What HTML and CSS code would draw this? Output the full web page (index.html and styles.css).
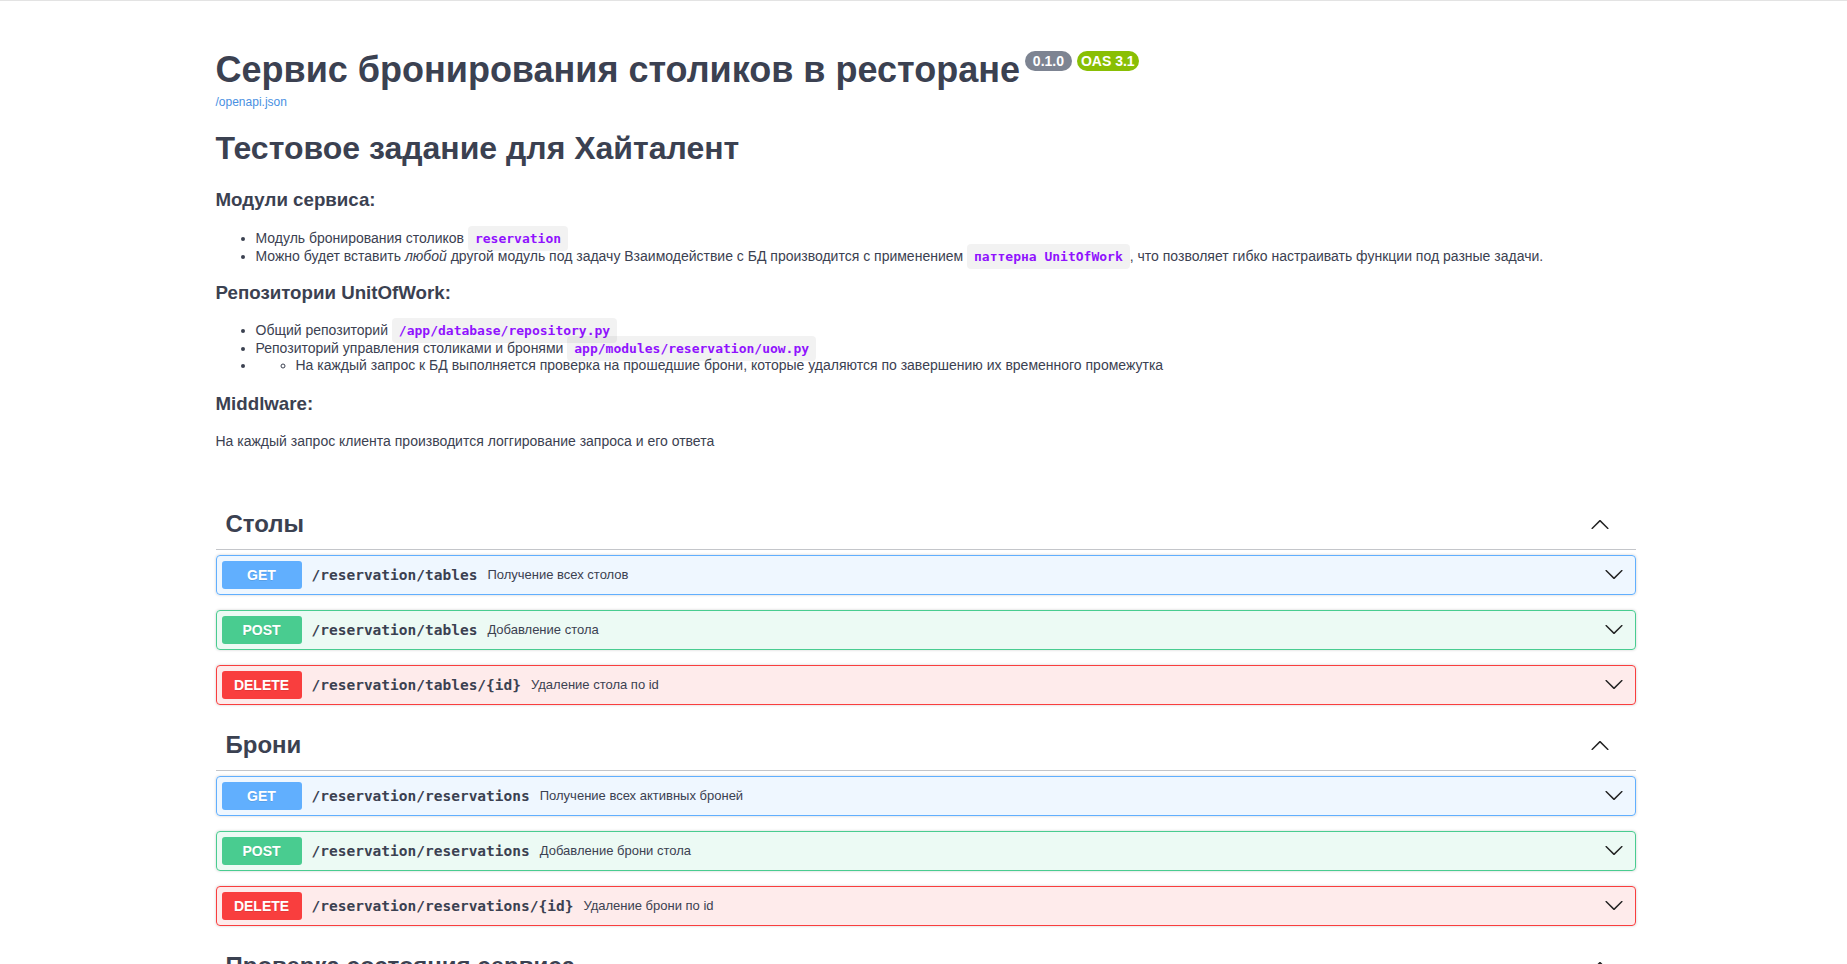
FILE: index.html
```html
<!DOCTYPE html>
<html lang="ru">
<head>
<meta charset="utf-8">
<title>Сервис бронирования столиков в ресторане - Swagger UI</title>
<link rel="stylesheet" href="styles.css">
</head>
<body>
<div class="page">
  <div class="wrapper">
    <div class="info">
      <h2 class="title">Сервис бронирования столиков в ресторане<span class="badge"><pre class="version"> 0.1.0 </pre></span><span class="badge oas"><pre class="version">OAS 3.1</pre></span></h2>
      <a class="url" href="#">/openapi.json</a>
      <div class="description">
        <h1>Тестовое задание для Хайталент</h1>
        <h3 class="first">Модули сервиса:</h3>
        <ul class="first-list">
          <li>Модуль бронирования столиков <code>reservation</code></li>
          <li>Можно будет вставить <em>любой</em> другой модуль под задачу Взаимодействие с БД производится с применением <code>паттерна UnitOfWork</code>, что позволяет гибко настраивать функции под разные задачи.</li>
        </ul>
        <h3 class="second">Репозитории UnitOfWork:</h3>
        <ul>
          <li>Общий репозиторий <code>/app/database/repository.py</code></li>
          <li>Репозиторий управления столиками и бронями <code>app/modules/reservation/uow.py</code></li>
          <li><ul class="sub"><li>На каждый запрос к БД выполняется проверка на прошедшие брони, которые удаляются по завершению их временного промежутка</li></ul></li>
        </ul>
        <h3>Middlware:</h3>
        <p>На каждый запрос клиента производится логгирование запроса и его ответа</p>
      </div>
    </div>

    <section class="tag-section">
      <h3 class="tag"><span class="tag-name">Столы</span>
        <svg class="arrow" viewBox="0 0 20 20"><path d="M17.418 14.908C17.69 15.176 18.127 15.176 18.397 14.908C18.667 14.64 18.668 14.207 18.397 13.939L10.489 6.109C10.219 5.841 9.782 5.841 9.51 6.109L1.602 13.939C1.332 14.207 1.332 14.64 1.602 14.908C1.873 15.176 2.311 15.176 2.581 14.908L10 7.767L17.418 14.908Z"/></svg>
      </h3>
      <div class="opblock get">
        <span class="method">GET</span><span class="path">/reservation/tables</span><span class="desc">Получение всех столов</span>
        <svg class="arrow down" viewBox="0 0 20 20"><path d="M17.418 14.908C17.69 15.176 18.127 15.176 18.397 14.908C18.667 14.64 18.668 14.207 18.397 13.939L10.489 6.109C10.219 5.841 9.782 5.841 9.51 6.109L1.602 13.939C1.332 14.207 1.332 14.64 1.602 14.908C1.873 15.176 2.311 15.176 2.581 14.908L10 7.767L17.418 14.908Z"/></svg>
      </div>
      <div class="opblock post">
        <span class="method">POST</span><span class="path">/reservation/tables</span><span class="desc">Добавление стола</span>
        <svg class="arrow down" viewBox="0 0 20 20"><path d="M17.418 14.908C17.69 15.176 18.127 15.176 18.397 14.908C18.667 14.64 18.668 14.207 18.397 13.939L10.489 6.109C10.219 5.841 9.782 5.841 9.51 6.109L1.602 13.939C1.332 14.207 1.332 14.64 1.602 14.908C1.873 15.176 2.311 15.176 2.581 14.908L10 7.767L17.418 14.908Z"/></svg>
      </div>
      <div class="opblock delete">
        <span class="method">DELETE</span><span class="path">/reservation/tables/{id}</span><span class="desc">Удаление стола по id</span>
        <svg class="arrow down" viewBox="0 0 20 20"><path d="M17.418 14.908C17.69 15.176 18.127 15.176 18.397 14.908C18.667 14.64 18.668 14.207 18.397 13.939L10.489 6.109C10.219 5.841 9.782 5.841 9.51 6.109L1.602 13.939C1.332 14.207 1.332 14.64 1.602 14.908C1.873 15.176 2.311 15.176 2.581 14.908L10 7.767L17.418 14.908Z"/></svg>
      </div>
    </section>

    <section class="tag-section">
      <h3 class="tag"><span class="tag-name">Брони</span>
        <svg class="arrow" viewBox="0 0 20 20"><path d="M17.418 14.908C17.69 15.176 18.127 15.176 18.397 14.908C18.667 14.64 18.668 14.207 18.397 13.939L10.489 6.109C10.219 5.841 9.782 5.841 9.51 6.109L1.602 13.939C1.332 14.207 1.332 14.64 1.602 14.908C1.873 15.176 2.311 15.176 2.581 14.908L10 7.767L17.418 14.908Z"/></svg>
      </h3>
      <div class="opblock get">
        <span class="method">GET</span><span class="path">/reservation/reservations</span><span class="desc">Получение всех активных броней</span>
        <svg class="arrow down" viewBox="0 0 20 20"><path d="M17.418 14.908C17.69 15.176 18.127 15.176 18.397 14.908C18.667 14.64 18.668 14.207 18.397 13.939L10.489 6.109C10.219 5.841 9.782 5.841 9.51 6.109L1.602 13.939C1.332 14.207 1.332 14.64 1.602 14.908C1.873 15.176 2.311 15.176 2.581 14.908L10 7.767L17.418 14.908Z"/></svg>
      </div>
      <div class="opblock post">
        <span class="method">POST</span><span class="path">/reservation/reservations</span><span class="desc">Добавление брони стола</span>
        <svg class="arrow down" viewBox="0 0 20 20"><path d="M17.418 14.908C17.69 15.176 18.127 15.176 18.397 14.908C18.667 14.64 18.668 14.207 18.397 13.939L10.489 6.109C10.219 5.841 9.782 5.841 9.51 6.109L1.602 13.939C1.332 14.207 1.332 14.64 1.602 14.908C1.873 15.176 2.311 15.176 2.581 14.908L10 7.767L17.418 14.908Z"/></svg>
      </div>
      <div class="opblock delete">
        <span class="method">DELETE</span><span class="path">/reservation/reservations/{id}</span><span class="desc">Удаление брони по id</span>
        <svg class="arrow down" viewBox="0 0 20 20"><path d="M17.418 14.908C17.69 15.176 18.127 15.176 18.397 14.908C18.667 14.64 18.668 14.207 18.397 13.939L10.489 6.109C10.219 5.841 9.782 5.841 9.51 6.109L1.602 13.939C1.332 14.207 1.332 14.64 1.602 14.908C1.873 15.176 2.311 15.176 2.581 14.908L10 7.767L17.418 14.908Z"/></svg>
      </div>
    </section>

    <section class="tag-section">
      <h3 class="tag"><span class="tag-name">Проверка состояния сервиса</span>
        <svg class="arrow" viewBox="0 0 20 20"><path d="M17.418 14.908C17.69 15.176 18.127 15.176 18.397 14.908C18.667 14.64 18.668 14.207 18.397 13.939L10.489 6.109C10.219 5.841 9.782 5.841 9.51 6.109L1.602 13.939C1.332 14.207 1.332 14.64 1.602 14.908C1.873 15.176 2.311 15.176 2.581 14.908L10 7.767L17.418 14.908Z"/></svg>
      </h3>
    </section>
  </div>
</div>
</body>
</html>
```

FILE: styles.css
```css
html, body {
  margin: 0;
  padding: 0;
  background: #fff;
}

body {
  font-family: "Liberation Sans", Arial, sans-serif;
  color: #3b4151;
}

.page {
  border-top: 1px solid #e3e3e3;
  padding-left: 4px;
}

.wrapper {
  max-width: 1460px;
  margin: 0 auto;
  padding: 0 20px;
  box-sizing: border-box;
}

/* ---------- info ---------- */
.info {
  padding: 48px 0 48px;
}

.title {
  margin: 0;
  font-size: 36px;
  line-height: 42px;
  font-weight: 700;
  color: #3b4151;
}

.badge {
  display: inline-block;
  vertical-align: top;
  margin: 2px 0 0 5px;
  padding: 2px 4px;
  border-radius: 57px;
  background: #7d8492;
}

.badge.oas {
  background: #89bf04;
}

.version {
  margin: 0;
  font-family: "Liberation Sans", Arial, sans-serif;
  font-size: 14px;
  line-height: 16px;
  font-weight: 700;
  color: #fff;
}

.url {
  display: block;
  margin-top: 3px;
  font-size: 12px;
  line-height: 16px;
  color: #4990e2;
  text-decoration: none;
}

.description {
  font-size: 14px;
  line-height: 17.6px;
}

.description h1 {
  margin: 20px 0 0;
  font-size: 32px;
  line-height: 37px;
  font-weight: 700;
}

.description h3 {
  margin: 18px 0 0;
  font-size: 18.72px;
  line-height: 22px;
  font-weight: 700;
}

.description h3.first {
  margin-top: 22px;
}

.description h3.second {
  margin-top: 17px;
}

.description ul {
  margin: 18px 0 0;
  padding-left: 40px;
}

.description ul.first-list {
  margin-top: 19px;
}

.description ul.sub {
  margin: 0;
  list-style-type: circle;
}

.description p {
  margin: 18px 0 0;
}

.description code {
  padding: 5px 7px;
  border-radius: 4px;
  background: rgba(0, 0, 0, 0.05);
  font-family: "DejaVu Sans Mono", monospace;
  font-size: 13px;
  font-weight: 700;
  color: #9012fe;
}

/* ---------- tags ---------- */
.tag {
  display: flex;
  align-items: center;
  height: 50px;
  margin: 0 0 5px;
  padding: 0 26px 0 10px;
  border-bottom: 1px solid rgba(59, 65, 81, 0.3);
  font-size: 24px;
  font-weight: 700;
  color: #3b4151;
  box-sizing: content-box;
}

.tag-name {
  flex: 1;
}

.arrow {
  width: 20px;
  height: 20px;
  fill: #222;
  flex: none;
}

/* ---------- operations ---------- */
.opblock {
  display: flex;
  align-items: center;
  margin: 0 0 15px;
  padding: 5px 11px 5px 5px;
  border: 1px solid;
  border-radius: 4px;
  box-shadow: 0 0 3px rgba(0, 0, 0, 0.19);
}

.method {
  min-width: 80px;
  padding: 6px 0;
  border-radius: 3px;
  font-size: 14px;
  line-height: 16px;
  font-weight: 700;
  text-align: center;
  color: #fff;
  text-shadow: 0 1px 0 rgba(0, 0, 0, 0.1);
}

.path {
  padding: 0 10px;
  font-family: "DejaVu Sans Mono", monospace;
  font-size: 14.5px;
  font-weight: 700;
  color: #3b4151;
}

.desc {
  flex: 1;
  font-size: 13px;
  color: #3b4151;
}

.arrow.down {
  transform: rotate(180deg);
}

.opblock.get {
  border-color: #61affe;
  background: rgba(97, 175, 254, 0.1);
}
.opblock.get .method {
  background: #61affe;
}

.opblock.post {
  border-color: #49cc90;
  background: rgba(73, 204, 144, 0.1);
}
.opblock.post .method {
  background: #49cc90;
}

.opblock.delete {
  border-color: #f93e3e;
  background: rgba(249, 62, 62, 0.1);
}
.opblock.delete .method {
  background: #f93e3e;
}
```
